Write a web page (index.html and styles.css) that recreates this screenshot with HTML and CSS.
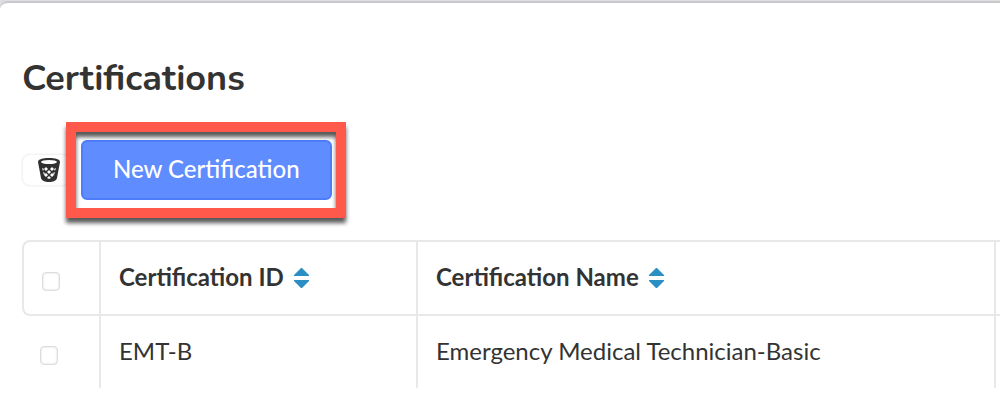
FILE: index.html
```html
<!DOCTYPE html>
<html lang="en">
<head>
    <meta charset="UTF-8">
    <meta name="viewport" content="width=device-width, initial-scale=1.0">
    <title>Certifications</title>
    <link rel="stylesheet" href="styles.css">
</head>
<body>
    <main class="panel">
        <h1>Certifications</h1>

        <div class="toolbar">
            <button type="button" class="trash-btn" aria-label="Delete selected">
                <svg width="22" height="24" viewBox="0 0 22 24" aria-hidden="true">
                    <path fill="#303030" d="M0 4C0 1 5 0 11 0s11 1 11 4l-3 16c-.6 2.600-4 4-8 4s-7.400-1.400-8-4z"/>
                    <ellipse cx="11" cy="4" rx="8" ry="2" fill="#fff"/>
                    <path fill="#fff" d="M4 10l2 1-1 2zM18 10l-2 1 1 2zM8 9l2 2-2 2-2-2zM14 9l2 2-2 2-2-2zM11 12l2 2-2 2-2-2zM5 14l2 1-1 2zM17 14l-2 1 1 2zM8 15l2 2-2 2-2-2zM14 15l2 2-2 2-2-2zM11 18l2 2-2 1-2-1z"/>
                </svg>
            </button>
            <!-- Highlighted action -->
            <div class="callout">
                <button type="button" class="new-btn">New Certification</button>
            </div>
        </div>

        <table class="cert-table">
            <colgroup>
                <col class="col-check">
                <col class="col-id">
                <col class="col-name">
                <col>
            </colgroup>
            <thead>
                <tr>
                    <th><input type="checkbox" aria-label="Select all"></th>
                    <th>
                        Certification ID
                        <svg class="sort" width="15" height="20" viewBox="0 0 15 20" aria-hidden="true">
                            <path d="M7 0h1l7 7v1H0V7zM0 12h15v1l-7 7H7l-7-7z"/>
                        </svg>
                    </th>
                    <th>
                        Certification Name
                        <svg class="sort" width="15" height="20" viewBox="0 0 15 20" aria-hidden="true">
                            <path d="M7 0h1l7 7v1H0V7zM0 12h15v1l-7 7H7l-7-7z"/>
                        </svg>
                    </th>
                    <th></th>
                </tr>
            </thead>
            <tbody>
                <tr>
                    <td><input type="checkbox" aria-label="Select EMT-B"></td>
                    <td>EMT-B</td>
                    <td>Emergency Medical Technician-Basic</td>
                    <td></td>
                </tr>
            </tbody>
        </table>
    </main>
</body>
</html>
```
FILE: styles.css
```css
* {
    box-sizing: border-box;
}

body {
    margin: 0;
    padding-top: 1px;
    background-color: #dedee1;
    color: #333;
    font-family: 'Lato', sans-serif;
    font-size: 24px;
    overflow-x: hidden;
}

.panel {
    min-height: calc(100vh - 1px);
    padding: 53px 0 28px 22px;
    background-color: #fff;
    border-top: 2px solid #c9c9cd;
    border-top-left-radius: 8px;
}

h1 {
    margin: 0 0 39px;
    font-family: 'Nunito', 'Lato', sans-serif;
    font-size: 36px;
    line-height: 45px;
    font-weight: 700;
}

.toolbar {
    display: flex;
    align-items: center;
    gap: 11px;
    margin-bottom: 40px;
}

button {
    font: inherit;
    cursor: pointer;
}

.trash-btn {
    display: flex;
    align-items: center;
    justify-content: flex-end;
    width: 48px;
    height: 32px;
    padding: 0 9px;
    background-color: #fff;
    border: 1px solid #f3f3f3;
    border-radius: 8px;
    box-shadow: 0 0 2px rgba(0, 0, 0, 0.08);
}

.callout {
    position: relative;
}

/* Red frame drawn over the button and its neighbours */
.callout::after {
    content: '';
    position: absolute;
    inset: -18px -14px -18px -15px;
    border: 10px solid #ff594b;
    filter: drop-shadow(0 5px 2px rgba(0, 0, 0, 0.65));
    pointer-events: none;
}

.new-btn {
    display: block;
    height: 60px;
    padding: 0 30px 4px;
    background-color: #5f8cff;
    border: 2px solid #4e7dfa;
    border-radius: 6px;
    color: #fff;
    font-weight: 500;
}

.cert-table {
    width: calc(100% + 40px);
    table-layout: fixed;
    border-collapse: separate;
    border-spacing: 0;
}

.col-check {
    width: 77px;
}

.col-id {
    width: 317px;
}

.col-name {
    width: 578px;
}

.cert-table th,
.cert-table td {
    padding: 0 18px 4px;
    text-align: left;
    border-left: 2px solid #e8e8e8;
    white-space: nowrap;
}

.cert-table th {
    height: 76px;
    border-top: 2px solid #e8e8e8;
    border-bottom: 2px solid #e8e8e8;
    font-weight: 700;
}

.cert-table th:first-child {
    border-radius: 8px 0 0 8px;
}

.cert-table td {
    height: 72px;
}

.cert-table td:first-child {
    border-left: none;
}

.sort {
    margin-left: 4px;
    vertical-align: -2px;
    fill: #2b8fc3;
}

input[type="checkbox"] {
    appearance: none;
    display: block;
    width: 18px;
    height: 19px;
    margin: 10px 0 0;
    background-color: #fff;
    border: 1px solid #ddd;
    border-radius: 4px;
    box-shadow: inset 0 0 2px rgba(0, 0, 0, 0.2);
}
```
